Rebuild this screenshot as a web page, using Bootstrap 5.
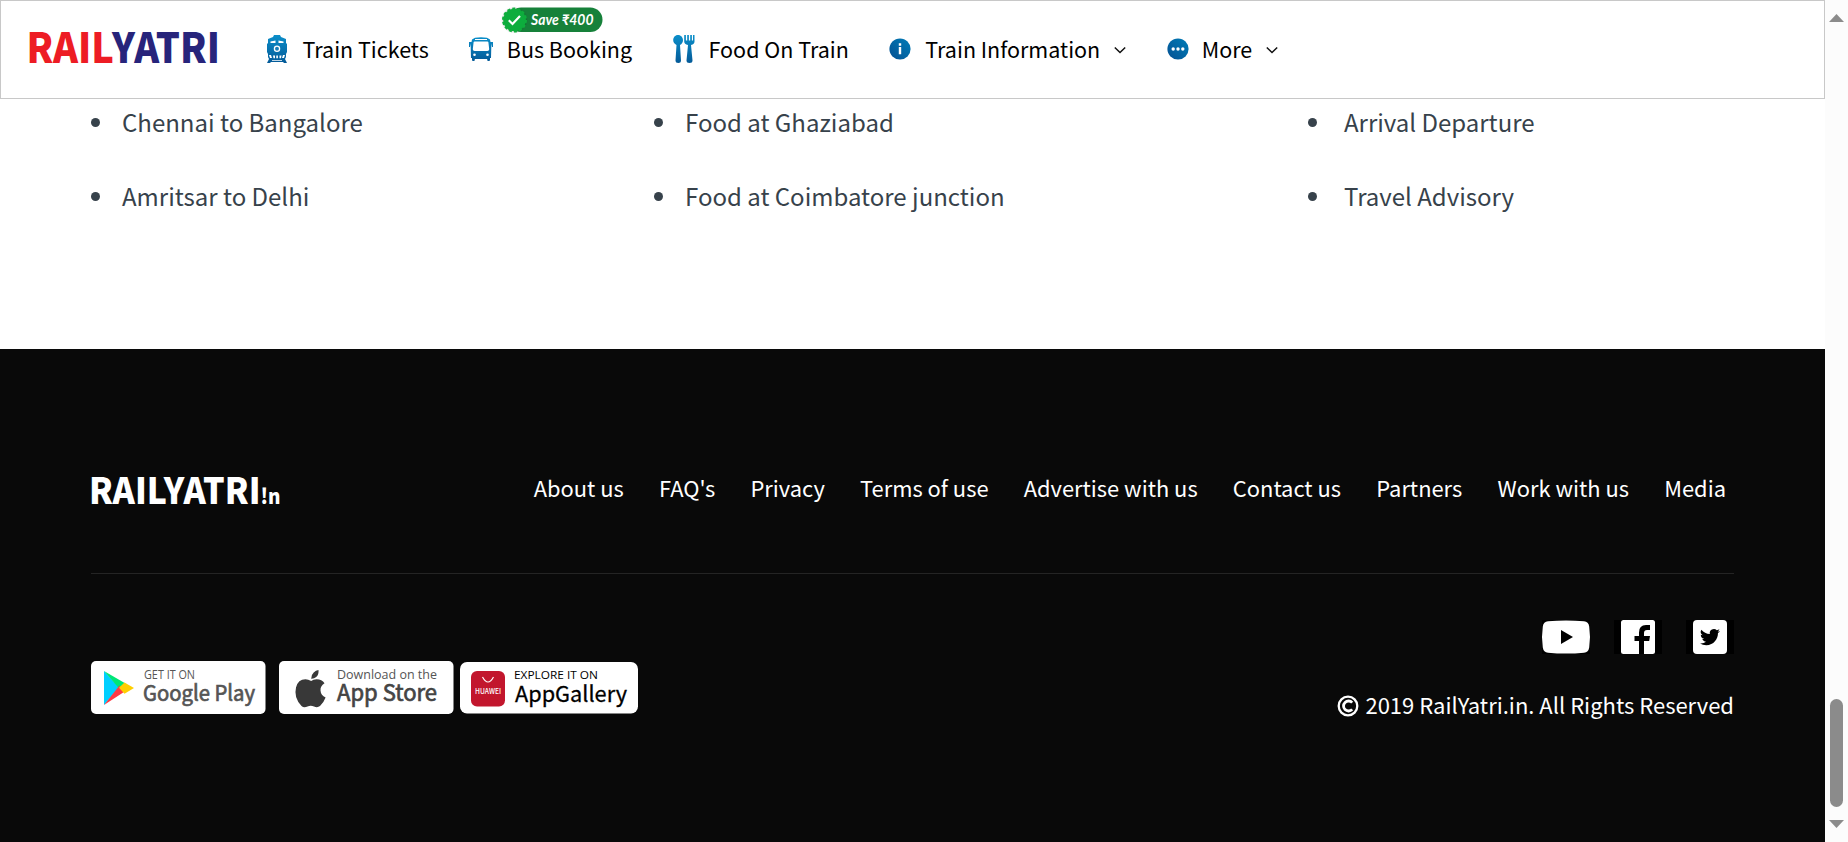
<!DOCTYPE html>
<html lang="en">
<head>
<meta charset="utf-8">
<title>RailYatri</title>
<link href="https://cdn.jsdelivr.net/npm/bootstrap@5.3.0/dist/css/bootstrap.min.css" rel="stylesheet">
<style>
body{font-family:"Noto Sans CJK SC","Noto Sans",sans-serif;background:#fff;height:842px;overflow:hidden}
svg{display:block;flex:none;overflow:visible}
.page-area{width:1825px;height:842px}
.site-header{width:1825px;height:99px;border:1px solid #c8c8c8;padding:0 0 2px 27px;z-index:5}
.site-header .brand-mark{margin-top:-3px}
.menu-item{font-size:21.5px;line-height:30px;color:#000;white-space:nowrap;text-decoration:none;margin-left:40.500px}
.menu-item.first-item{margin-left:46px}
.menu-item .chev{margin:3px 0 0 14px}
.menu-item .gap-a{margin-left:14px}
.save-tag{left:28px;top:-30px;line-height:0}
.links-area{height:349px;padding-top:85px}
.links-area ul{list-style:none;margin:0}
.links-area li{display:flex;align-items:center;height:74px;font-size:24px;color:#37424b;white-space:nowrap}
.links-area li::before{content:"";width:9px;height:9px;border-radius:50%;background:#37424b;margin-right:22px}
.links-area .col-route{width:563px;padding:0 0 0 91px}
.links-area .col-food{width:654px;padding:0 0 0 91px}
.links-area .col-info{padding:0 0 0 91px}
.links-area .col-info li::before{margin-right:27px}
.site-footer{height:493px;background:#090909;color:#fff;padding:0 91px}
.foot-top{height:225px;padding-top:53px;border-bottom:1px solid #242424}
.foot-top .brand-mark{margin-top:4px}
.foot-nav{gap:35.2px;padding-right:8px}
.foot-nav a{color:#fff;text-decoration:none;font-size:21.9px;line-height:32px;white-space:nowrap}
.stores{padding-top:87px}
.social-row{padding-top:46px;gap:24px}
.copyright{font-size:22px;line-height:32px;padding-top:34px;white-space:nowrap}
.scroll-track{width:23px;height:842px;background:#fcfcfc;padding:14px 0}
.scroll-thumb{width:13px;height:108px;border-radius:7px;background:#8b8b8b;margin-bottom:13px}
</style>
</head>
<body class="d-flex">
<div class="page-area">
<header class="site-header position-fixed top-0 start-0 bg-white d-flex align-items-center">
  <svg class="brand-mark" width="192" height="40" viewBox="0 0 192 40">
    <g font-family="Noto Sans CJK SC" font-weight="900" font-size="42">
      <text x="-1.500" y="35.500" fill="#ed1c24" textLength="87.500" lengthAdjust="spacingAndGlyphs">RAIL</text>
      <text x="84" y="35.500" fill="#27247b" textLength="108" lengthAdjust="spacingAndGlyphs">YATRI</text>
    </g>
  </svg>
  <a class="menu-item first-item d-flex align-items-center">
    <svg width="22" height="28" viewBox="0 0 22 28"><defs><linearGradient id="blueV" x1="0" y1="0" x2="0" y2="1"><stop offset="0" stop-color="#0b8fca"/><stop offset="1" stop-color="#045a98"/></linearGradient></defs>
      <path fill="url(#blueV)" d="M7 2 8 0h6l1 2 5 2v4l1 1v8l-1 2v3l-1 2 2 4h-3l-1-1H5l-1 1H1l2-4-1-2v-3l-1-2V9l1-1V4z"/>
      <path fill="#fff" d="M4.500 6.500 9.500 5.500v2.500h-5zM12.500 5.500l5 1v1.500h-5zM3 20h2l1 3H4zm4 .6h2v2.600H7.500zm3.300 0h1.600v2.600h-1.600zm3.200 0h2l-.5 2.600h-1.500zM17 20h2l-1 3h-2zM6 25h10v.8H6z"/>
      <circle cx="11" cy="13.700" r="2.600" fill="#1a7fb8" stroke="#fff" stroke-width="1.300"/></svg>
    <span style="margin-left:14.500px">Train Tickets</span></a>
  <a class="menu-item d-flex align-items-center position-relative">
    <svg width="24" height="24" viewBox="0 0 24 24"><path fill="url(#blueV)" fill-rule="evenodd" d="M6 .8Q12-.5 18 .8l3 1.800.5 2.400H24v5h-1l-.6-3.500-.4 14.500h-1v2q0 1-1 1h-.8q-1 0-1-1v-1H5.800v1q0 1-1 1H4q-1 0-1-1v-2H2L1.600 6.500 1 10H0V5h2.500L3 2.600zM6 2v1h12V2zM4.600 5.300l-.8 7q0 1.700 1.800 1.700h12.800q1.800 0 1.800-1.700l-.8-7q-.1-.8-1-.8H5.600q-.9 0-1 .8z"/><circle cx="5.500" cy="17.800" r="1.300" fill="#fff"/><circle cx="18.500" cy="17.800" r="1.300" fill="#fff"/></svg>
    <span style="margin-left:13.500px">Bus Booking</span>
    <span class="save-tag position-absolute">
      <svg width="108" height="32" viewBox="0 0 108 32"><defs><filter id="soft" x="-30%" y="-30%" width="160%" height="160%"><feDropShadow dx="0" dy="0" stdDeviation="1.300" flood-color="#000" flood-opacity=".4"/></filter></defs>
        <rect x="12" y="3.500" width="93.500" height="24.500" rx="12.200" fill="#16813a"/>
        <circle cx="17.500" cy="16" r="11.300" fill="#0fad3d" filter="url(#soft)"/>
        <circle cx="17.500" cy="16" r="11.500" fill="none" stroke="#0fad3d" stroke-width="2" stroke-dasharray="3 2.160"/>
        <path d="m11.800 16.300 3.700 3.700 7.500-8" fill="none" stroke="#fff" stroke-width="2.200"/>
        <text x="34" y="20.700" font-family="Lato" font-style="italic" font-weight="700" font-size="14.500" fill="#fff" textLength="62.500" lengthAdjust="spacingAndGlyphs">Save ₹400</text></svg>
    </span></a>
  <a class="menu-item d-flex align-items-center">
    <svg width="22" height="28" viewBox="0 0 22 28"><path fill="url(#blueV)" d="M5 0c3 0 5 2.500 5 5.300 0 2.200-1.200 3.800-3 4.700l1 15.500Q8 28 5.300 28T2.500 25.500L3.500 10C1.500 9 .2 7.500.2 5.300.2 2.500 2 0 5 0zM11.200 0h1.700v5.500h1.300V0h1.700v5.500h1.300V0h1.700v5.500H20V0h1.500v6.500q0 2.500-3.500 3.500l1.500 15.500Q19.500 28 16.500 28T13.500 25.500L15 10q-3.800-1-3.800-3.500z"/></svg>
    <span class="gap-a">Food On Train</span></a>
  <a class="menu-item d-flex align-items-center">
    <svg width="22" height="22" viewBox="0 0 22 22"><defs><linearGradient id="blueD" x1="1" y1="0" x2="0" y2="1"><stop offset="0" stop-color="#007db8"/><stop offset="1" stop-color="#045092"/></linearGradient></defs><circle cx="11" cy="11" r="10.600" fill="url(#blueD)"/><path stroke="#fff" stroke-width="2.400" d="M11 9v7.200M11 5.300v2.400"/></svg>
    <span class="gap-a">Train Information</span>
    <svg class="chev" width="12" height="8" viewBox="0 0 12 8"><path d="m.8 1.500 5.200 5 5.200-5" fill="none" stroke="#111" stroke-width="1.500"/></svg></a>
  <a class="menu-item d-flex align-items-center">
    <svg width="22" height="22" viewBox="0 0 22 22"><circle cx="11" cy="11" r="10.600" fill="url(#blueD)"/><g fill="#fff"><circle cx="6.200" cy="11" r="1.700"/><circle cx="11" cy="11" r="1.700"/><circle cx="15.800" cy="11" r="1.700"/></g></svg>
    <span style="margin-left:13px">More</span>
    <svg class="chev" width="12" height="8" viewBox="0 0 12 8"><path d="m.8 1.500 5.200 5 5.200-5" fill="none" stroke="#111" stroke-width="1.500"/></svg></a>
</header>
<main class="links-area d-flex">
  <ul class="col-route"><li>Chennai to Bangalore</li><li>Amritsar to Delhi</li></ul>
  <ul class="col-food"><li>Food at Ghaziabad</li><li>Food at Coimbatore junction</li></ul>
  <ul class="col-info"><li>Arrival Departure</li><li>Travel Advisory</li></ul>
</main>
<footer class="site-footer">
  <div class="foot-top d-flex justify-content-between align-items-center">
    <svg class="brand-mark" width="190" height="40" viewBox="0 0 190 40">
      <g font-family="Noto Sans CJK SC" font-weight="900" fill="#fff">
        <text x="-2" y="33.500" font-size="36.500" textLength="171.500" lengthAdjust="spacingAndGlyphs">RAILYATRI</text>
        <text x="169.500" y="33.500" font-size="21" textLength="20" lengthAdjust="spacingAndGlyphs">!n</text></g></svg>
    <nav class="foot-nav d-flex">
      <a>About us</a><a>FAQ's</a><a>Privacy</a><a>Terms of use</a><a>Advertise with us</a><a>Contact us</a><a>Partners</a><a>Work with us</a><a>Media</a>
    </nav>
  </div>
  <div class="d-flex justify-content-between">
    <div class="stores d-flex">
      <svg width="175" height="54" viewBox="0 0 175 54"><rect width="174.500" height="53" rx="5" fill="#fff"/>
        <path fill="#00cfff" d="M13 10v34l15-17.500z"/><path fill="#00e676" d="m13 10 21.500 12.500L28.500 28z"/><path fill="#ff3a44" d="m13 44 21.500-14-6-5.500z"/><path fill="#ffcf00" d="m33.500 21.500 9.500 5.500-9.500 5.800-5.500-6z"/>
        <text x="53" y="18" font-family="Open Sans" font-size="12" fill="#555" textLength="51" lengthAdjust="spacingAndGlyphs">GET IT ON</text>
        <text x="52" y="40" font-family="Noto Sans CJK SC" font-size="22" fill="#555" stroke="#555" stroke-width=".7" textLength="112" lengthAdjust="spacingAndGlyphs">Google Play</text></svg>
      <svg width="175" height="54" viewBox="0 0 175 54" style="margin-left:13px"><rect width="174.500" height="53" rx="5" fill="#fff"/>
        <path fill="#383838" d="M39.500 9q.5 4.500-2.300 7-2.200 2-5 1.800-.2-3.800 2.500-6.300Q36.800 9.300 39.500 9zM32.200 20q2-1.500 5.300-1.800 5.500 0 8 4-4.300 2.700-4 7.300.4 5 5.100 7Q44.500 42 41 45q-2.500 2-6 .5-3.300-1.500-6.500 0-3.500 1.800-6-.5-8-8.500-5.500-18.500 2-8.200 9.500-8.200 2.700.1 5.700 1.700z"/>
        <text x="58" y="18" font-family="Open Sans" font-size="12.500" fill="#555" textLength="100" lengthAdjust="spacingAndGlyphs">Download on the</text>
        <text x="58" y="39.500" font-family="Noto Sans CJK SC" font-size="23" fill="#444" stroke="#444" stroke-width=".7" textLength="100" lengthAdjust="spacingAndGlyphs">App Store</text></svg>
      <svg width="179" height="54" viewBox="0 0 179 54" style="margin-left:6px"><rect width="178" height="51.500" y="1" rx="7" fill="#fff"/>
        <rect x="11" y="10" width="34" height="35.500" rx="6" fill="#c2162d"/><path d="M22.500 16q5.500 10 11 0" fill="none" stroke="#fff" stroke-width="1.200"/>
        <text x="15" y="32.500" font-family="Noto Sans CJK SC" font-weight="500" font-size="7.600" fill="#fff" textLength="26" lengthAdjust="spacingAndGlyphs">HUAWEI</text>
        <text x="54" y="18" font-family="Open Sans" font-weight="500" font-size="11.500" textLength="84" lengthAdjust="spacingAndGlyphs">EXPLORE IT ON</text>
        <text x="55" y="41" font-family="Noto Sans CJK SC" font-size="22" stroke="#000" stroke-width=".3" textLength="112" lengthAdjust="spacingAndGlyphs">AppGallery</text></svg>
    </div>
    <div class="d-flex flex-column align-items-end">
      <div class="social-row d-flex">
        <svg width="48" height="34" viewBox="0 0 48 34"><path fill="#000" d="M0 0h48v34H0z"/><path fill="#fff" d="M6 1.300Q24-.5 42 1.300q4.500.5 5.200 5.200 1.600 10.500 0 21-.7 4.700-5.200 5.200-18 1.800-36 0-4.500-.5-5.200-5.200-1.600-10.500 0-21Q1.500 1.800 6 1.300z"/><path d="M19 10v14l12-7z"/></svg>
        <svg width="48" height="34" viewBox="0 0 48 34"><path d="M0 0h48v34H0z"/><rect x="7" width="34" height="34" rx="2.500" fill="#fff"/><path d="M25 34V21h-4.500v-5H25v-3.500Q25 5 32 5h4v5h-3q-3 0-3 3v3h6l-.8 5H30v13z"/></svg>
        <svg width="48" height="34" viewBox="0 0 48 34"><path d="M0 0h48v34H0z"/><rect x="7" width="34" height="34" rx="4" fill="#fff"/><path transform="translate(14 6.500) scale(1.250)" d="M5.026 15c6.038 0 9.341-5.003 9.341-9.334 0-.14 0-.282-.006-.422A6.685 6.685 0 0 0 16 3.542a6.658 6.658 0 0 1-1.889.518 3.301 3.301 0 0 0 1.447-1.817 6.533 6.533 0 0 1-2.087.793A3.286 3.286 0 0 0 7.875 6.030a9.325 9.325 0 0 1-6.767-3.429 3.289 3.289 0 0 0 1.018 4.382A3.323 3.323 0 0 1 .64 6.575v.045a3.288 3.288 0 0 0 2.632 3.218 3.203 3.203 0 0 1-.865.115 3.230 3.230 0 0 1-.614-.057 3.283 3.283 0 0 0 3.067 2.277A6.588 6.588 0 0 1 .780 13.580a6.320 6.320 0 0 1-.780-.045A9.344 9.344 0 0 0 5.026 15z"/></svg>
      </div>
      <div class="copyright d-flex align-items-center">
        <svg width="22" height="22" viewBox="0 0 22 22" style="margin:3px 6px 0 0" fill="none" stroke="#fff"><circle cx="11" cy="11" r="9.300" stroke-width="2.300"/><path stroke-width="2.800" d="M15.200 7.600a5 5 0 1 0 0 6.800"/></svg>
        <span>2019 RailYatri.in. All Rights Reserved</span>
      </div>
    </div>
  </div>
</footer>
</div>
<aside class="scroll-track d-flex flex-column align-items-center">
  <svg width="15" height="8" viewBox="0 0 15 8"><path fill="#8b8b8b" d="M7.500 0 15 8H0z"/></svg>
  <div class="scroll-thumb mt-auto"></div>
  <svg width="15" height="8" viewBox="0 0 15 8"><path fill="#8b8b8b" d="M0 0h15L7.500 8z"/></svg>
</aside>
<script src="https://cdn.jsdelivr.net/npm/bootstrap@5.3.0/dist/js/bootstrap.bundle.min.js"></script>
</body>
</html>
